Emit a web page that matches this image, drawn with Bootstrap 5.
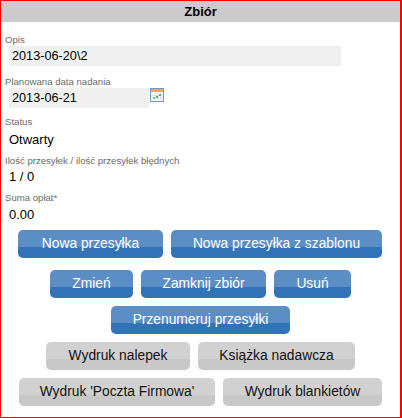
<!DOCTYPE html>
<html lang="pl">
<head>
<meta charset="utf-8">
<title>Zbiór</title>
<link href="https://cdn.jsdelivr.net/npm/bootstrap@5.3.0/dist/css/bootstrap.min.css" rel="stylesheet">
<style>
html,body{height:100%;background:#fff}
body{font-family:"Liberation Sans",Arial,sans-serif;overflow:hidden}
.frame{width:402px;height:418px;border:solid #f00;border-width:1px 2px 1px 1px;display:flex;flex-direction:column}
.head{height:21px;line-height:21px;background:#cccaca;color:#000;font-size:13px;font-weight:700;text-align:center;flex:none}
.form-area{padding:12px 8px 0 4px}
.fld-label{font-size:9.6px;line-height:12px;color:#6b6b6b;margin:0}
.fld-box{background:#f0f0f0;height:20px;line-height:20px;font-size:12.7px;color:#000;padding-left:3px;margin-left:4px}
.fld-wide{width:332px}
.fld-date{width:140px}
.fld-text{font-size:13px;line-height:20px;color:#000;padding-left:4px}
.val-down2{padding-top:2px}
.val-down1{padding-top:1px}
.cal{display:block;flex:none;margin-left:1px}
.grp-date{margin-top:10px}
.grp-status{margin-top:8px}
.grp-next{margin-top:5px}
.btn-row{display:flex;justify-content:center;gap:8px}
.act{display:block;height:28px;line-height:28px;padding:0;border:0;border-radius:5px;font-size:13.8px;text-align:center;font-family:inherit}
.act-blue{color:#fff;background:linear-gradient(to bottom,#5b8ec5 0,#5b8ec5 62%,#3272b6 62%,#3272b6 100%)}
.act-gray{color:#111;background:linear-gradient(to bottom,#d1d1d1 0,#d1d1d1 62%,#c8c8c8 62%,#c8c8c8 100%)}
.buttons{display:flex;flex-direction:column;margin-top:5px}
.w1{width:145px}.w2{width:211px}.w3{width:83px}.w4{width:125px}.w5{width:77px}.w6{width:179px}.w7{width:144px}.w8{width:157px}.w9{width:196px}.w10{width:159px}
.mt-a{margin-top:12px}.mt-b{margin-top:8px}
.btn-shift{padding-right:1px}
</style>
</head>
<body>
<div class="frame">
  <div class="head">Zbiór</div>
  <div class="form-area">
    <div>
      <p class="fld-label">Opis</p>
      <div class="fld-box fld-wide">2013-06-20\2</div>
    </div>
    <div class="grp-date">
      <p class="fld-label">Planowana data nadania</p>
      <div class="d-flex">
        <div class="fld-box fld-date">2013-06-21</div>
        <svg class="cal" width="14" height="14" viewBox="0 0 14 14" aria-hidden="true">
          <rect x=".5" y=".5" width="13" height="13" fill="#eef4fb" stroke="#6f9bd1"/>
          <rect x="1" y="1" width="12" height="3" fill="#f4a25e"/>
          <rect x="2" y="5" width="10" height="7" fill="#fff"/>
          <path d="M5 5v7M8 5v7M11 5v7M2 7.5h10M2 10h10" stroke="#c4d3e6" stroke-width=".7"/>
          <rect x="6" y="8" width="2" height="2" fill="#5fae5f"/>
          <rect x="9" y="6" width="2" height="2" fill="#5fae5f"/>
          <rect x="3" y="9" width="2" height="2" fill="#7cc07c"/>
        </svg>
      </div>
    </div>
    <div class="grp-status">
      <p class="fld-label">Status</p>
      <div class="fld-text val-down2">Otwarty</div>
    </div>
    <div class="grp-next">
      <p class="fld-label">Ilość przesyłek / ilość przesyłek błędnych</p>
      <div class="fld-text">1 / 0</div>
    </div>
    <div class="grp-next">
      <p class="fld-label">Suma opłat*</p>
      <div class="fld-text val-down1">0.00</div>
    </div>
  </div>
  <div class="buttons">
    <div class="btn-row btn-shift"><button type="button" class="act act-blue w1">Nowa przesyłka</button><button type="button" class="act act-blue w2">Nowa przesyłka z szablonu</button></div>
    <div class="btn-row mt-a"><button type="button" class="act act-blue w3">Zmień</button><button type="button" class="act act-blue w4">Zamknij zbiór</button><button type="button" class="act act-blue w5">Usuń</button></div>
    <div class="btn-row mt-b"><button type="button" class="act act-blue w6">Przenumeruj przesyłki</button></div>
    <div class="btn-row mt-b"><button type="button" class="act act-gray w7">Wydruk nalepek</button><button type="button" class="act act-gray w8">Książka nadawcza</button></div>
    <div class="btn-row mt-b"><button type="button" class="act act-gray w9">Wydruk 'Poczta Firmowa'</button><button type="button" class="act act-gray w10">Wydruk blankietów</button></div>
  </div>
</div>
<script src="https://cdn.jsdelivr.net/npm/bootstrap@5.3.0/dist/js/bootstrap.bundle.min.js"></script>
</body>
</html>
